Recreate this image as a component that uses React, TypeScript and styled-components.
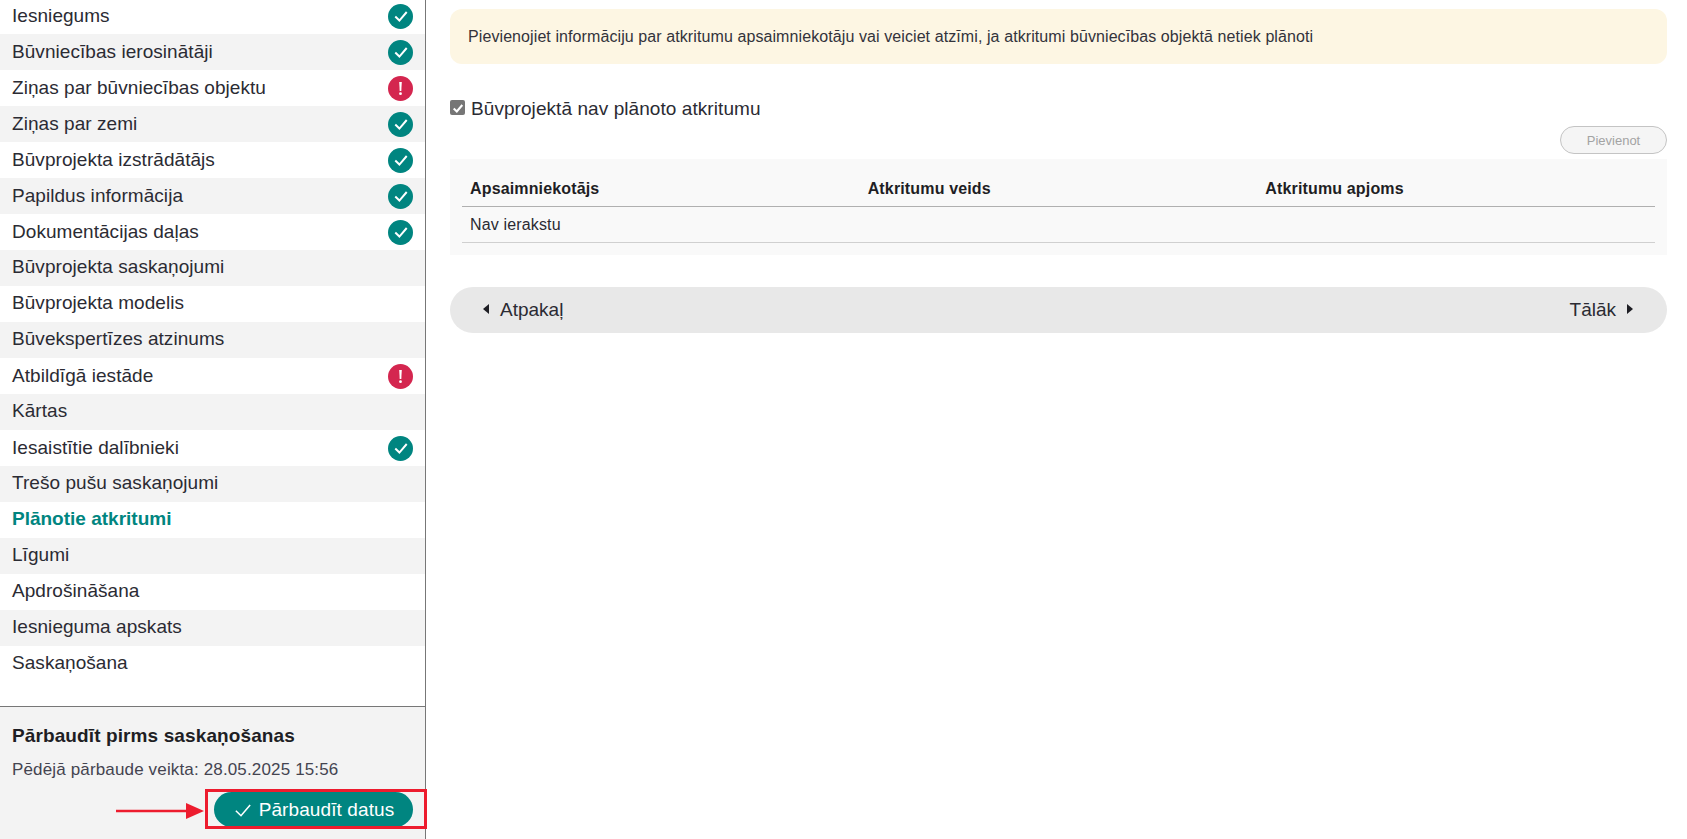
import React from "react";
import styled, { createGlobalStyle } from "styled-components";

const GlobalStyle = createGlobalStyle`
  html, body {
    margin: 0;
    padding: 0;
    height: 100%;
    background: #ffffff;
    overflow: hidden;
  }
  #root {
    height: 100%;
  }
  * {
    box-sizing: border-box;
  }
`;

const Page = styled.div`
  display: flex;
  width: 1687px;
  height: 839px;
  font-family: "Liberation Sans", Arial, sans-serif;
  color: #2b2b33;
`;

const Sidebar = styled.aside`
  flex-shrink: 0;
  display: flex;
  flex-direction: column;
  width: 426px;
  height: 100%;
  border-right: 1px solid #777777;
`;

const StepList = styled.ul`
  flex: 1;
  margin: -2px 0 0;
  padding: 0;
  list-style: none;
`;

const StepRow = styled.li<{ $active?: boolean }>`
  display: flex;
  align-items: center;
  justify-content: space-between;
  height: 36px;
  padding: 0 12px;
  font-size: 19px;
  letter-spacing: ${({ $active }) => ($active ? "0" : "0.05px")};
  font-weight: ${({ $active }) => ($active ? 700 : 400)};
  color: ${({ $active }) => ($active ? "#008580" : "#2b2b33")};
  &:nth-child(even) {
    background: #f3f3f3;
  }
`;

/* rows without a badge sit one pixel higher in the original */
const StepLabel = styled.span<{ $raised: boolean }>`
  margin-top: ${({ $raised }) => ($raised ? "-2px" : "0")};
`;

const StatusBadge = styled.span<{ $error?: boolean }>`
  display: flex;
  align-items: center;
  justify-content: center;
  width: 25px;
  height: 25px;
  border-radius: 50%;
  background: ${({ $error }) => ($error ? "#d4264f" : "#008580")};
`;

const CheckPanel = styled.section`
  flex-shrink: 0;
  height: 133px;
  padding: 20px 12px 0;
  background: #f3f3f3;
  border-top: 1px solid #777777;
`;

const CheckTitle = styled.h3`
  margin: 0;
  font-size: 19px;
  line-height: 18px;
  letter-spacing: 0.11px;
  font-weight: 700;
  color: #1e1e24;
`;

const CheckDate = styled.p`
  margin: 16px 0 0;
  font-size: 17px;
  line-height: 18px;
  letter-spacing: 0.15px;
  color: #444450;
`;

const ActionRow = styled.div`
  position: relative;
  display: flex;
  justify-content: flex-end;
  margin-top: 13px;
`;

const CheckButton = styled.button`
  display: flex;
  align-items: center;
  justify-content: center;
  gap: 6px;
  width: 199px;
  height: 35px;
  padding: 0;
  border: none;
  border-radius: 18px;
  background: #008580;
  color: #ffffff;
  font-family: inherit;
  font-size: 19px;
  letter-spacing: 0.1px;
`;

const Highlight = styled.span`
  position: absolute;
  top: -3px;
  right: -14px;
  width: 222px;
  height: 40px;
  border: 3px solid #ed1c2e;
  pointer-events: none;
`;

const ArrowMark = styled.svg`
  position: absolute;
  top: 9px;
  left: 104px;
  width: 90px;
  height: 20px;
`;

const Main = styled.main`
  flex: 1;
  padding: 9px 20px 0 24px;
`;

const Notice = styled.div`
  display: flex;
  align-items: center;
  height: 55px;
  padding: 0 18px;
  border-radius: 12px;
  background: #fdf6e3;
  font-size: 16px;
  letter-spacing: 0.09px;
  color: #33333b;
`;

const CheckLine = styled.label`
  display: flex;
  align-items: center;
  gap: 6px;
  margin-top: 33px;
  height: 24px;
  font-size: 19px;
  letter-spacing: 0.07px;
  color: #2b2b33;
`;

const Tick = styled.span`
  display: flex;
  align-items: center;
  justify-content: center;
  width: 15px;
  height: 15px;
  margin-top: -3px;
  border-radius: 2px;
  background: #767676;
`;

const ToolRow = styled.div`
  display: flex;
  justify-content: flex-end;
  margin-top: 5px;
`;

const AddButton = styled.button`
  width: 107px;
  height: 28px;
  padding: 0;
  border: 1px solid #c4c4c4;
  border-radius: 14px;
  background: #f5f5f5;
  color: #a3a3a3;
  font-family: inherit;
  font-size: 13px;
`;

const TableWrap = styled.div`
  height: 96px;
  margin-top: 5px;
  padding: 9px 12px 0;
  background: #f9f9f9;
`;

const Table = styled.table`
  width: 100%;
  border-collapse: collapse;
  table-layout: fixed;
`;

const HeadCell = styled.th`
  height: 38px;
  padding: 4px 8px 0;
  border-bottom: 1px solid #b0b0b0;
  text-align: left;
  font-size: 16px;
  letter-spacing: 0.15px;
  font-weight: 700;
  color: #1e1e24;
`;

const BodyCell = styled.td`
  height: 36px;
  padding: 2px 8px 0;
  border-bottom: 1px solid #d0d0d0;
  font-size: 16px;
  letter-spacing: 0.15px;
  color: #2b2b33;
`;

const NavBar = styled.nav`
  display: flex;
  align-items: center;
  justify-content: space-between;
  height: 46px;
  margin-top: 32px;
  padding: 0 34px 0 33px;
  border-radius: 23px;
  background: #e8e8e8;
`;

const NavLink = styled.a`
  display: flex;
  align-items: center;
  gap: 11px;
  font-size: 19px;
  color: #2b2b33;
`;

const Caret = styled.svg`
  width: 6px;
  height: 10px;
  margin-top: -2px;
  fill: #1e1e24;
`;

const steps: { label: string; status?: "ok" | "error"; active?: boolean }[] = [
  { label: "Iesniegums", status: "ok" },
  { label: "Būvniecības ierosinātāji", status: "ok" },
  { label: "Ziņas par būvniecības objektu", status: "error" },
  { label: "Ziņas par zemi", status: "ok" },
  { label: "Būvprojekta izstrādātājs", status: "ok" },
  { label: "Papildus informācija", status: "ok" },
  { label: "Dokumentācijas daļas", status: "ok" },
  { label: "Būvprojekta saskaņojumi" },
  { label: "Būvprojekta modelis" },
  { label: "Būvekspertīzes atzinums" },
  { label: "Atbildīgā iestāde", status: "error" },
  { label: "Kārtas" },
  { label: "Iesaistītie dalībnieki", status: "ok" },
  { label: "Trešo pušu saskaņojumi" },
  { label: "Plānotie atkritumi", active: true },
  { label: "Līgumi" },
  { label: "Apdrošināšana" },
  { label: "Iesnieguma apskats" },
  { label: "Saskaņošana" },
];

const CheckGlyph = ({ size = 16, width = 1.7 }: { size?: number; width?: number }) => (
  <svg width={size} height={size} viewBox="0 0 14 14" fill="none" stroke="#ffffff" strokeWidth={width}>
    <path d="M2 7.5 L5.6 11 L12 3.5" />
  </svg>
);

const ErrorGlyph = () => (
  <svg width="25" height="25" viewBox="0 0 25 25" fill="#ffffff">
    <path d="M11.2 6 H13.8 L13.3 15 H11.7 Z" />
    <circle cx="12.5" cy="17.7" r="1.4" />
  </svg>
);

export default function App() {
  return (
    <>
      <GlobalStyle />
      <Page>
        <Sidebar>
          <StepList>
            {steps.map((step) => (
              <StepRow key={step.label} $active={step.active}>
                <StepLabel $raised={!step.status}>{step.label}</StepLabel>
                {step.status && (
                  <StatusBadge $error={step.status === "error"}>
                    {step.status === "ok" ? <CheckGlyph /> : <ErrorGlyph />}
                  </StatusBadge>
                )}
              </StepRow>
            ))}
          </StepList>
          <CheckPanel>
            <CheckTitle>Pārbaudīt pirms saskaņošanas</CheckTitle>
            <CheckDate>Pēdējā pārbaude veikta: 28.05.2025 15:56</CheckDate>
            <ActionRow>
              <ArrowMark viewBox="0 0 90 20">
                <path d="M0 10 L72 10" stroke="#ed1c2e" strokeWidth="2.5" />
                <path d="M70 2 L88 10 L70 18 Z" fill="#ed1c2e" />
              </ArrowMark>
              <CheckButton>
                <CheckGlyph size={20} width={1.1} />
                Pārbaudīt datus
              </CheckButton>
              <Highlight />
            </ActionRow>
          </CheckPanel>
        </Sidebar>
        <Main>
          <Notice>
            Pievienojiet informāciju par atkritumu apsaimniekotāju vai veiciet atzīmi, ja atkritumi būvniecības objektā netiek plānoti
          </Notice>
          <CheckLine>
            <Tick>
              <CheckGlyph size={12} width={2.4} />
            </Tick>
            Būvprojektā nav plānoto atkritumu
          </CheckLine>
          <ToolRow>
            <AddButton>Pievienot</AddButton>
          </ToolRow>
          <TableWrap>
            <Table>
              <thead>
                <tr>
                  <HeadCell>Apsaimniekotājs</HeadCell>
                  <HeadCell>Atkritumu veids</HeadCell>
                  <HeadCell>Atkritumu apjoms</HeadCell>
                </tr>
              </thead>
              <tbody>
                <tr>
                  <BodyCell colSpan={3}>Nav ierakstu</BodyCell>
                </tr>
              </tbody>
            </Table>
          </TableWrap>
          <NavBar>
            <NavLink>
              <Caret viewBox="0 0 6 10">
                <path d="M6 0 V10 L0 5 Z" />
              </Caret>
              Atpakaļ
            </NavLink>
            <NavLink>
              Tālāk
              <Caret viewBox="0 0 6 10">
                <path d="M0 0 V10 L6 5 Z" />
              </Caret>
            </NavLink>
          </NavBar>
        </Main>
      </Page>
    </>
  );
}
